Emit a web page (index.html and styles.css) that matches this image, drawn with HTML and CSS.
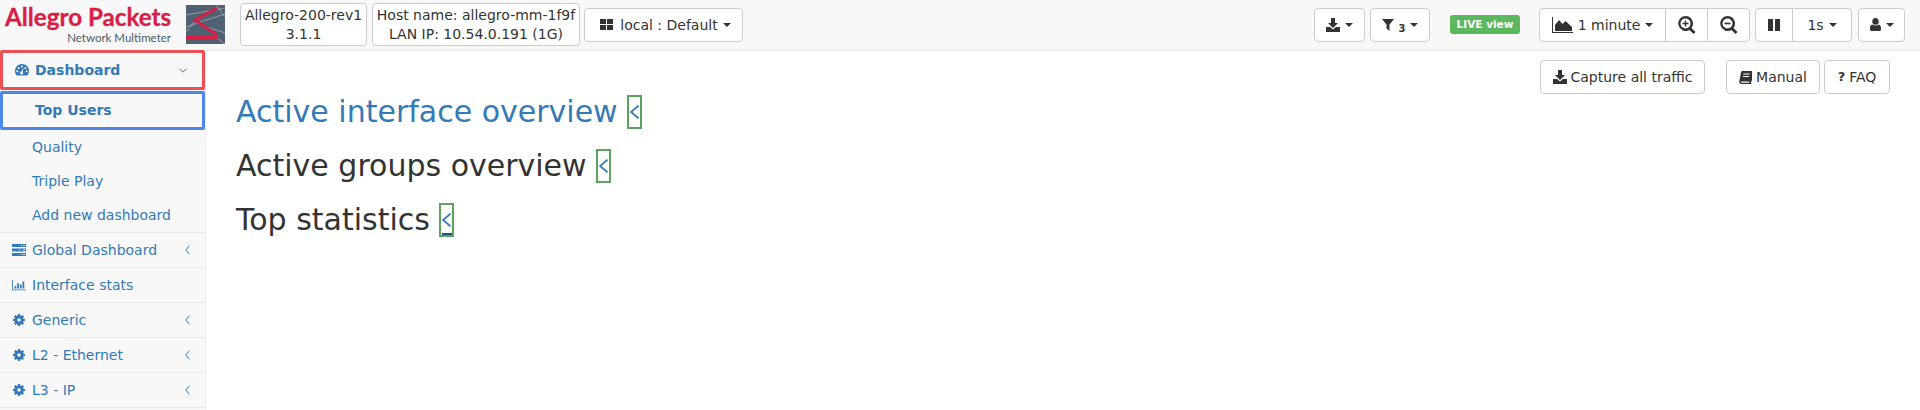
FILE: index.html
```html
<!DOCTYPE html>
<html lang="en">
<head>
<meta charset="utf-8">
<title>Allegro Packets</title>
<link rel="stylesheet" href="styles.css">
</head>
<body>
<svg class="sprites" width="0" height="0" aria-hidden="true">
  <symbol id="i-download" viewBox="0 0 14 14"><path d="M5 0h4v5h3L7 10 2 5h3zM0 9h4l3 2.600L10 9h4v5H0z"/></symbol>
  <symbol id="i-filter" viewBox="0 0 12 12"><path d="M0 0h12L7.500 5.500V12L4.500 9.500V5.500z"/></symbol>
  <symbol id="i-grid" viewBox="0 0 13 11"><path d="M0 0h6v5H0zM7 0h6v5H7zM0 6h6v5H0zM7 6h6v5H7z"/></symbol>
  <symbol id="i-area" viewBox="0 0 21 16"><path d="M0 0h1v15h20v1H0z"/><path d="M3 14V8l4-5 3.500 4 3-3 6.500 6v4z"/></symbol>
  <symbol id="i-zoomin" viewBox="0 0 18 18"><path fill-rule="evenodd" d="M7.500 0a7.500 7.500 0 0 1 6 12l4 4-2 2-4-4a7.500 7.500 0 1 1-4-14zm0 2.500a5 5 0 1 0 0 10 5 5 0 0 0 0-10z"/><path d="M6.800 4.500h1.400v2.300h2.300v1.400H8.200v2.300H6.800V8.200H4.500V6.800h2.300z"/></symbol>
  <symbol id="i-zoomout" viewBox="0 0 18 18"><path fill-rule="evenodd" d="M7.500 0a7.500 7.500 0 0 1 6 12l4 4-2 2-4-4a7.500 7.500 0 1 1-4-14zm0 2.500a5 5 0 1 0 0 10 5 5 0 0 0 0-10z"/><path d="M4.500 6.600h6v1.700h-6z"/></symbol>
  <symbol id="i-pause" viewBox="0 0 12 12"><path d="M0 0h5v12H0zM7 0h5v12H7z"/></symbol>
  <symbol id="i-user" viewBox="0 0 11 13"><path d="M5.500 0a3.200 3.200 0 0 1 3.200 3.500 3.200 3.200 0 0 1-6.400 0A3.200 3.200 0 0 1 5.500 0zM2.300 6.500c1.800 1.300 4.600 1.300 6.400 0 1.500.3 2.300 1.600 2.300 3.500v1.500c0 .9-.6 1.500-1.500 1.500h-8C.6 13 0 12.400 0 11.500V10c0-1.900.8-3.200 2.300-3.500z"/></symbol>
  <symbol id="i-book" viewBox="0 0 13 13"><path fill-rule="evenodd" d="M3.500 0H13v9.500L11.800 11 12.500 13H2.500C.8 13 0 12 .3 10.500L2 1.500C2.200.6 2.700 0 3.500 0zM4.500 2.500l-.3 1h6.300l.3-1zM4 5l-.3 1h6.300l.3-1zM2.800 10.500c-.5 0-.9.2-1 .6-.1.400.2.700.8.700h7.900l-.4-1.300z"/></symbol>
  <symbol id="i-gauge" viewBox="0 0 14 12"><path fill-rule="evenodd" d="M7 0a7 7 0 0 1 6 10.600l-.6.900H1.600l-.6-.9A7 7 0 0 1 7 0zM7 1.500a1 1 0 1 0 0 2 1 1 0 0 0 0-2zM3.700 3a1 1 0 1 0 0 2 1 1 0 0 0 0-2zM10.300 3a1 1 0 1 0 0 2 1 1 0 0 0 0-2zM2.300 6.300a1 1 0 1 0 0 2 1 1 0 0 0 0-2zM11.700 6.300a1 1 0 1 0 0 2 1 1 0 0 0 0-2zM8.400 3.800L6.500 7.400a1.500 1.500 0 1 0 1.300.6z"/></symbol>
  <symbol id="i-server" viewBox="0 0 14 12"><path fill-rule="evenodd" d="M0 0h14v3H0zM9 1v1h1V1zM11 1v1h2V1zM0 4.500h14v3H0zM7 5.500v1h1v-1zM11 5.500v1h2v-1zM0 9h14v3H0zM9 10v1h1v-1zM11 10v1h2v-1z"/></symbol>
  <symbol id="i-bars" viewBox="0 0 16 12"><path d="M0 0h1v11h15v1H0z"/><path d="M3 7h2v3H3zM6 4h2v6H6zM9 5.500h2V10H9zM12 2h2v8h-2z"/></symbol>
  <symbol id="i-cog" viewBox="-1 -1 14 14"><path fill-rule="evenodd" d="M4.800-1h2.400l.3 1.700 1.100.5L10 .2l1.800 1.800-1 1.400.5 1.100 1.700.3v2.400l-1.700.3-.5 1.100 1 1.400L10 11.800l-1.400-1-1.100.5-.3 1.700H4.800l-.3-1.700-1.100-.5-1.400 1L.2 10l1-1.400-.5-1.100L-1 7.200V4.800l1.700-.3.5-1.100-1-1.400L2 .2l1.400 1 1.100-.5zM6 4a2 2 0 1 0 0 4 2 2 0 0 0 0-4z"/></symbol>
  <symbol id="i-angle-l" viewBox="0 0 5 10"><path d="M4.500 .7L.8 5l3.700 4.300" fill="none" stroke="currentColor" stroke-width="1"/></symbol>
  <symbol id="i-angle-big" viewBox="0 0 9 14"><path d="M8.500 .7L1 7l7.500 6.300" fill="none" stroke="currentColor" stroke-width="1.700"/></symbol>
  <symbol id="i-angle-d" viewBox="0 0 8 5"><path d="M.5 .7L4 4.200 7.500 .7" fill="none" stroke="currentColor" stroke-width="1"/></symbol>
</svg>

<header class="topbar">
  <div class="brand">
    <div class="brand-name">Allegro Packets</div>
    <div class="brand-sub">Network Multimeter</div>
  </div>
  <svg class="device" viewBox="0 0 39 39" aria-hidden="true">
    <rect width="39" height="39" fill="#4f6172"/>
    <path d="M0 10L39 3M0 22L14 17L39 9M0 27L8 17M30 0L39 12M21 22L39 28M31 33L39 39" stroke="#aeb8c2" stroke-width=".7" fill="none"/>
    <path d="M31 3L9 15L31 30" stroke="#d81e45" stroke-width="3" fill="none"/>
    <path d="M0 31H32V35H0z" fill="#d81e45"/>
  </svg>
  <div class="info info-device"><div>Allegro-200-rev1</div><div>3.1.1</div></div>
  <div class="info info-host"><div>Host name: allegro-mm-1f9f</div><div>LAN IP: 10.54.0.191 (1G)</div></div>
  <button class="btn btn-local"><svg class="ic ic-grid"><use href="#i-grid"/></svg>local : Default<span class="caret"></span></button>

  <div class="spacer"></div>

  <button class="btn btn-export"><svg class="ic ic-dl"><use href="#i-download"/></svg><span class="caret"></span></button>
  <button class="btn btn-filter"><svg class="ic ic-filter"><use href="#i-filter"/></svg><sub class="count">3</sub><span class="caret"></span></button>
  <span class="live">LIVE view</span>
  <div class="group group-time">
    <button class="btn btn-range"><svg class="ic ic-area"><use href="#i-area"/></svg>1 minute<span class="caret"></span></button>
    <button class="btn btn-zoom"><svg class="ic ic-zoom"><use href="#i-zoomin"/></svg></button>
    <button class="btn btn-zoom"><svg class="ic ic-zoom"><use href="#i-zoomout"/></svg></button>
  </div>
  <div class="group group-play">
    <button class="btn btn-pause"><svg class="ic ic-pause"><use href="#i-pause"/></svg></button>
    <button class="btn btn-rate">1s<span class="caret"></span></button>
  </div>
  <button class="btn btn-user"><svg class="ic ic-user"><use href="#i-user"/></svg><span class="caret"></span></button>
</header>

<div class="page">
  <nav class="sidebar">
    <a class="nav-item nav-active"><svg class="nav-ic"><use href="#i-gauge"/></svg><span class="nav-label">Dashboard</span><svg class="angle-d"><use href="#i-angle-d"/></svg></a>
    <a class="sub-item sub-active">Top Users</a>
    <div class="sub-list">
      <a class="sub-item">Quality</a>
      <a class="sub-item">Triple Play</a>
      <a class="sub-item">Add new dashboard</a>
    </div>
    <a class="nav-item"><svg class="nav-ic"><use href="#i-server"/></svg><span class="nav-label">Global Dashboard</span><svg class="angle-l"><use href="#i-angle-l"/></svg></a>
    <a class="nav-item"><svg class="nav-ic"><use href="#i-bars"/></svg><span class="nav-label">Interface stats</span></a>
    <a class="nav-item"><svg class="nav-ic nav-cog"><use href="#i-cog"/></svg><span class="nav-label">Generic</span><svg class="angle-l"><use href="#i-angle-l"/></svg></a>
    <a class="nav-item"><svg class="nav-ic nav-cog"><use href="#i-cog"/></svg><span class="nav-label">L2 - Ethernet</span><svg class="angle-l"><use href="#i-angle-l"/></svg></a>
    <a class="nav-item"><svg class="nav-ic nav-cog"><use href="#i-cog"/></svg><span class="nav-label">L3 - IP</span><svg class="angle-l"><use href="#i-angle-l"/></svg></a>
  </nav>
  <main class="content">
    <div class="actions">
      <button class="btn btn-capture"><svg class="ic ic-dl"><use href="#i-download"/></svg>Capture all traffic</button>
      <button class="btn btn-manual"><svg class="ic ic-book"><use href="#i-book"/></svg>Manual</button>
      <button class="btn btn-faq"><b class="q">?</b>FAQ</button>
    </div>
    <h3 class="title title-link">Active interface overview <span class="toggle"><svg class="toggle-ic"><use href="#i-angle-big"/></svg></span></h3>
    <h3 class="title">Active groups overview <span class="toggle"><svg class="toggle-ic"><use href="#i-angle-big"/></svg></span></h3>
    <h3 class="title">Top statistics <span class="toggle toggle-under"><svg class="toggle-ic"><use href="#i-angle-big"/></svg></span></h3>
  </main>
</div>
</body>
</html>
```
FILE: styles.css
```css
* { box-sizing: border-box; }
html, body { margin: 0; height: 100%; overflow: hidden; }
body { font-family: "DejaVu Sans", sans-serif; font-size: 14px; color: #333; background: #fff; line-height: 20px; }
.sprites { position: absolute; }

.topbar { display: flex; align-items: center; height: 51px; background: #f8f8f8; border-bottom: 1px solid #e7e7e7; padding: 0 15px 1px 5px; }
.brand { width: 167px; flex: none; text-align: right; margin-top: -2px; }
.brand-name { font-family: "Lato", sans-serif; font-weight: 700; font-size: 24.200px; line-height: 27px; color: #d81e45; white-space: nowrap; text-align: left; -webkit-text-stroke: .3px #d81e45; }
.brand-sub { font-family: "Lato", sans-serif; font-size: 11.500px; line-height: 14px; color: #4f5a66; margin-top: 1px; padding-right: 1px; white-space: nowrap; }
.device { width: 39px; height: 39px; flex: none; margin-left: 14px; }
.info { flex: none; height: 43px; margin-left: 5px; border: 1px solid #ccc; border-radius: 4px; background: #fff; text-align: center; font-size: 14px; line-height: 19px; padding: 2px 0; white-space: nowrap; }
.info-device { width: 127px; margin-left: 15px; }
.info-host { width: 208px; }

.btn { display: inline-flex; align-items: center; justify-content: center; height: 34px; padding: 0 12px; border: 1px solid #ccc; border-radius: 4px; background: #fff; color: #333; font: inherit; font-size: 14px; white-space: nowrap; flex: none; }
.ic { fill: #333; flex: none; }
.caret { width: 0; height: 0; margin-left: 5px; border-top: 4px solid #333; border-left: 4px solid transparent; border-right: 4px solid transparent; }
.spacer { flex: 1; }

.btn-local { width: 159px; margin-left: 4px; padding-left: 16px; padding-right: 12px; }
.ic-grid { width: 13px; height: 11px; margin-right: 7px; }
.ic-dl { width: 14px; height: 14px; }
.btn-export { width: 51px; }
.btn-filter { width: 60px; margin-left: 5px; }
.ic-filter { width: 12px; height: 12px; }
.count { font-size: 10px; font-weight: 700; line-height: 10px; margin: 8px 0 0 5px; }
.live { margin: 0 19px 0 20px; width: 70px; height: 19px; background: #5cb85c; color: #fff; border-radius: 3px; font-size: 10.500px; font-weight: 700; line-height: 18px; text-align: center; white-space: nowrap; }

.group { display: flex; flex: none; }
.group .btn { border-radius: 0; margin-left: -1px; }
.group .btn:first-child { border-radius: 4px 0 0 4px; margin-left: 0; }
.group .btn:last-child { border-radius: 0 4px 4px 0; }
.btn-range { width: 127px; }
.ic-area { width: 21px; height: 16px; margin-right: 5px; }
.btn-zoom { width: 43px; }
.ic-zoom { width: 18px; height: 18px; }
.group-play { margin-left: 5px; }
.btn-pause { width: 38px; }
.ic-pause { width: 12px; height: 12px; }
.btn-rate { width: 60px; }
.btn-user { width: 47px; margin-left: 6px; }
.ic-user { width: 11px; height: 13px; }

.page { display: flex; height: 359px; }
.sidebar { width: 206px; flex: none; background: #f8f8f8; border-right: 1px solid #eee; overflow: visible; }
.nav-item { display: flex; align-items: center; height: 35px; padding: 0 15px 0 12px; border-bottom: 1px solid #e7e7e7; color: #337ab7; font-size: 14px; }
.nav-ic { width: 14px; height: 12px; fill: #337ab7; flex: none; margin-right: 6px; }
.nav-label { flex: 1; white-space: nowrap; }
.nav-cog { width: 12px; height: 12px; margin: 0 7px 0 1px; }
.angle-l { width: 5px; height: 10px; color: #337ab7; flex: none; }
.angle-d { width: 8px; height: 5px; color: #337ab7; flex: none; margin-right: 0; }
.nav-active { height: 40px; margin-top: -1px; border: 3px solid #ed4f55; border-radius: 2px; padding-left: 12px; font-weight: 700; }
.sub-item { display: block; height: 34px; line-height: 34px; padding-left: 32px; color: #337ab7; font-size: 14px; }
.sub-active { height: 39px; margin-top: 1px; border: 3px solid #4b86e8; border-radius: 2px; padding-left: 32px; font-weight: 700; line-height: 33px; }
.sub-list { border-bottom: 1px solid #e7e7e7; height: 103px; }

.content { flex: 1; min-width: 0; padding: 9px 30px 0 30px; }
.actions { float: right; display: flex; }
.btn-capture { width: 165px; }
.btn-capture .ic-dl { margin-right: 4px; }
.btn-manual { width: 94px; margin-left: 21px; }
.ic-book { width: 13px; height: 13px; margin-right: 4px; }
.btn-faq { width: 66px; margin-left: 4px; }
.q { margin-right: 4px; font-size: 13px; }
.title { font-weight: 400; font-size: 30px; line-height: 34px; margin: 0 0 20px; color: #333; white-space: nowrap; }
.title-link { color: #337ab7; padding-top: 35px; }
.toggle { display: inline-flex; align-items: center; justify-content: center; width: 15px; height: 34px; border: 2px solid #5ba35e; vertical-align: top; color: #337ab7; }
.toggle-under { background: linear-gradient(#23527c, #23527c) center bottom / 10px 2px no-repeat; }
.toggle-ic { width: 9px; height: 14px; }
```
